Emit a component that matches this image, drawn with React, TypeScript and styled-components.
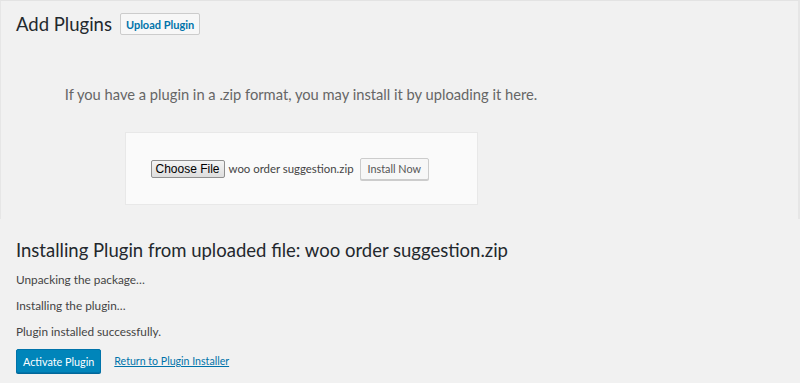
import { styled, createGlobalStyle } from "styled-components";

const GlobalStyle = createGlobalStyle`
  html, body {
    margin: 0;
    padding: 0;
    background: #f1f1f1;
  }
  body {
    font-family: Lato, "Open Sans", sans-serif;
    color: #23282d;
  }
`;

const Page = styled.div`
  width: 800px;
  height: 383px;
  overflow: hidden;
  display: flex;
  flex-direction: column;
`;

const UploadPanel = styled.section`
  height: 219px;
  box-sizing: border-box;
  border-top: 1px solid #e3e3e3;
  border-left: 1px solid #e6e6e6;
  border-right: 2px solid #e6e6e6;
  padding-top: 12px;
`;

const TitleRow = styled.div`
  display: flex;
  align-items: center;
  column-gap: 8px;
  padding-left: 15px;
`;

const PageTitle = styled.h1`
  margin: 0;
  font-size: 18.5px;
  font-weight: 400;
  color: #23282d;
`;

const AddNewButton = styled.button`
  font-family: inherit;
  font-size: 11px;
  font-weight: 700;
  color: #0073aa;
  background: #f7f7f7;
  border: 1px solid #cccccc;
  border-radius: 2px;
  height: 22px;
  padding: 0 5px;
`;

const UploadWrap = styled.div`
  width: 600px;
  text-align: center;
`;

const InstallHelp = styled.p`
  margin: 50px 0 0 0;
  font-size: 14.7px;
  color: #666666;
`;

const UploadCard = styled.form`
  width: 353px;
  height: 73px;
  box-sizing: border-box;
  margin: 29px auto 0;
  background: #fafafa;
  border: 1px solid #e8e8e8;
  display: flex;
  align-items: center;
  padding-left: 25px;
`;

const ChooseFile = styled.button`
  font-family: Arial, "Liberation Sans", sans-serif;
  font-size: 12px;
  color: #000;
  height: 18px;
  padding: 0 4px;
  background: linear-gradient(#f4f4f4, #dedede);
  border: 1px solid #8f8f8f;
  border-radius: 2px;
`;

const FileName = styled.span`
  margin-left: 4px;
  font-size: 11.4px;
  color: #444;
`;

const SecondaryButton = styled.button`
  margin-left: 6px;
  font-family: inherit;
  font-size: 10.8px;
  color: #555;
  background: #f7f7f7;
  border: 1px solid #cccccc;
  border-radius: 2px;
  box-shadow: 0 1px 0 #ccc;
  height: 22px;
  padding: 0 7px;
`;

const Results = styled.section`
  padding: 0 0 0 16px;
`;

const ResultTitle = styled.h2`
  margin: 20px 0 0 0;
  font-size: 18.5px;
  font-weight: 400;
  color: #23282d;
`;

const StatusLine = styled.p`
  margin: 11px 0 0 0;
  font-size: 11.8px;
  color: #444;
`;

const Actions = styled.div`
  display: flex;
  align-items: center;
  column-gap: 13px;
  margin-top: 10px;
`;

const PrimaryButton = styled.button`
  font-family: inherit;
  font-size: 10.8px;
  color: #fff;
  background: #0085ba;
  border: 1px solid #0073aa;
  border-radius: 2px;
  box-shadow: 0 1px 0 #006799;
  height: 24px;
  padding: 0 6px;
`;

const TextLink = styled.a`
  font-size: 10.6px;
  color: #0073aa;
  text-decoration: underline;
`;

export default function App() {
  return (
    <>
      <GlobalStyle />
      <Page>
        <UploadPanel>
          <TitleRow>
            <PageTitle>Add Plugins</PageTitle>
            <AddNewButton>Upload Plugin</AddNewButton>
          </TitleRow>
          <UploadWrap>
            <InstallHelp>If you have a plugin in a .zip format, you may install it by uploading it here.</InstallHelp>
            <UploadCard>
              <ChooseFile type="button">Choose File</ChooseFile>
              <FileName>woo order suggestion.zip</FileName>
              <SecondaryButton type="button">Install Now</SecondaryButton>
            </UploadCard>
          </UploadWrap>
        </UploadPanel>
        <Results>
          <ResultTitle>Installing Plugin from uploaded file: woo order suggestion.zip</ResultTitle>
          <StatusLine>Unpacking the package…</StatusLine>
          <StatusLine>Installing the plugin…</StatusLine>
          <StatusLine>Plugin installed successfully.</StatusLine>
          <Actions>
            <PrimaryButton type="button">Activate Plugin</PrimaryButton>
            <TextLink href="#">Return to Plugin Installer</TextLink>
          </Actions>
        </Results>
      </Page>
    </>
  );
}
